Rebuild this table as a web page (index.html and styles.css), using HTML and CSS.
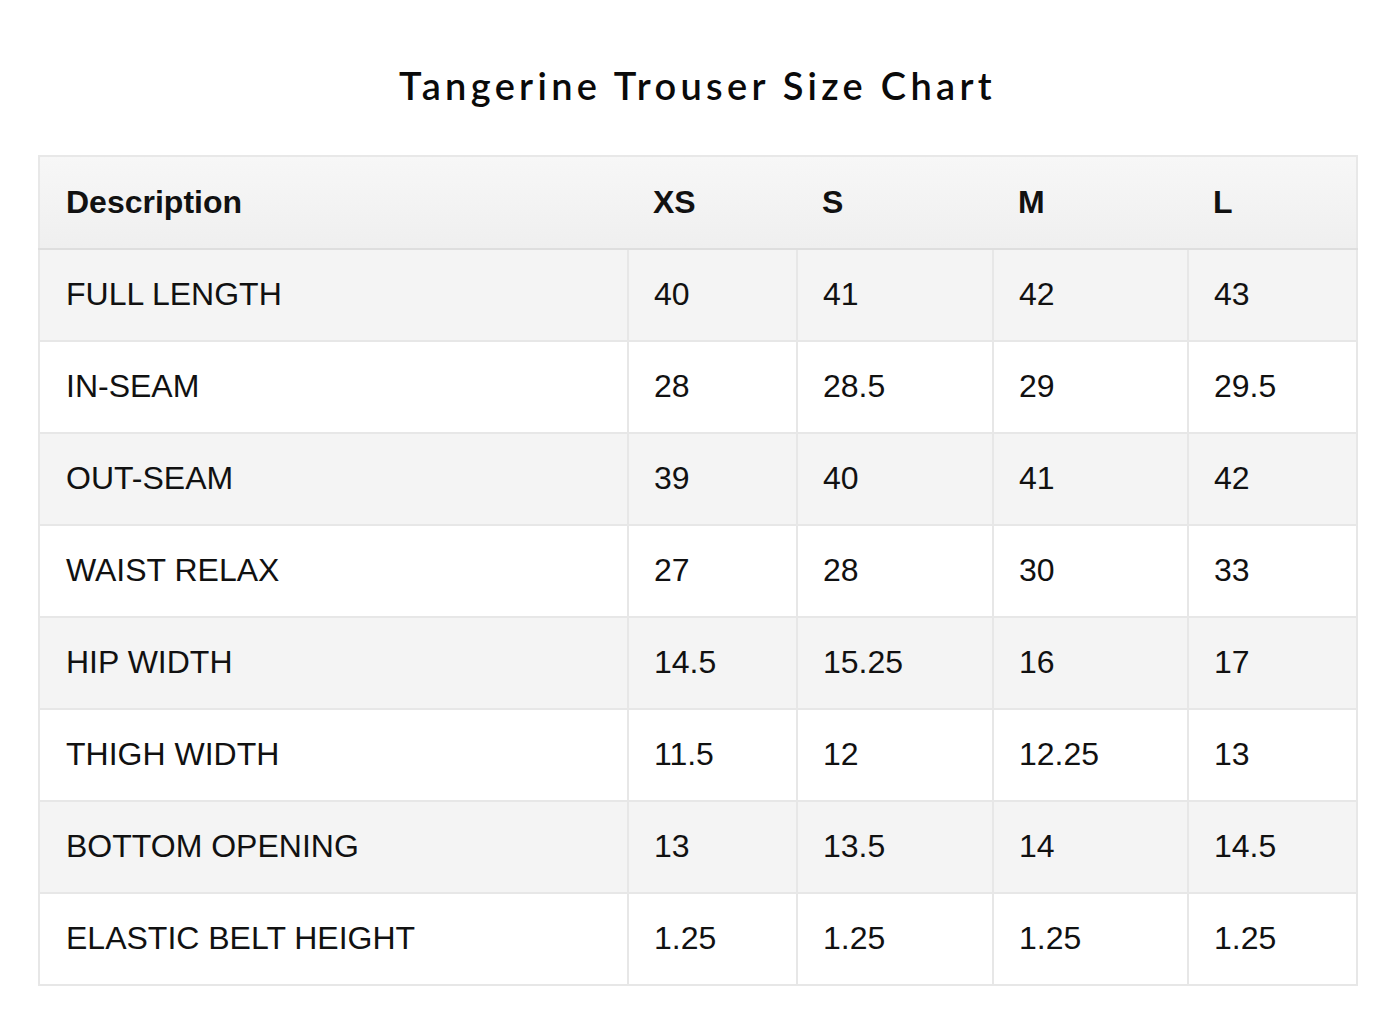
FILE: index.html
```html
<!DOCTYPE html>
<html>
<head>
<meta charset="utf-8">
<link rel="stylesheet" href="styles.css">
</head>
<body>
<div class="page">
  <h1 class="title">Tangerine Trouser Size Chart</h1>
  <table class="chart">
    <colgroup>
      <col class="c-desc">
      <col class="c-xs">
      <col class="c-s">
      <col class="c-m">
      <col class="c-l">
    </colgroup>
    <thead>
      <tr><th>Description</th><th>XS</th><th>S</th><th>M</th><th>L</th></tr>
    </thead>
    <tbody>
      <tr><td>FULL LENGTH</td><td>40</td><td>41</td><td>42</td><td>43</td></tr>
      <tr><td>IN-SEAM</td><td>28</td><td>28.5</td><td>29</td><td>29.5</td></tr>
      <tr><td>OUT-SEAM</td><td>39</td><td>40</td><td>41</td><td>42</td></tr>
      <tr><td>WAIST RELAX</td><td>27</td><td>28</td><td>30</td><td>33</td></tr>
      <tr><td>HIP WIDTH</td><td>14.5</td><td>15.25</td><td>16</td><td>17</td></tr>
      <tr><td>THIGH WIDTH</td><td>11.5</td><td>12</td><td>12.25</td><td>13</td></tr>
      <tr><td>BOTTOM OPENING</td><td>13</td><td>13.5</td><td>14</td><td>14.5</td></tr>
      <tr><td>ELASTIC BELT HEIGHT</td><td>1.25</td><td>1.25</td><td>1.25</td><td>1.25</td></tr>
    </tbody>
  </table>
</div>
</body>
</html>
```

FILE: styles.css
```css
html, body {
  margin: 0;
  padding: 0;
  background: #ffffff;
}
.page {
  padding: 60px 40px 0 38px;
}
.title {
  margin: 0 0 45px;
  height: 50px;
  line-height: 50px;
  text-align: center;
  font-family: "Lato", "Liberation Sans", sans-serif;
  font-weight: 600;
  font-size: 38px;
  letter-spacing: 4.3px;
  color: #0a0a0a;
}
.chart {
  width: 1318px;
  table-layout: fixed;
  border-collapse: collapse;
  font-family: "Liberation Sans", Arial, sans-serif;
  font-size: 32px;
  color: #111;
}
.c-desc { width: 589px; }
.c-xs { width: 169px; }
.c-s { width: 196px; }
.c-m { width: 195px; }
.c-l { width: 169px; }
.chart th {
  height: 91px;
  padding: 0 0 0 25px;
  text-align: left;
  font-weight: 700;
  background: linear-gradient(#f7f7f7, #efefef);
  border-top: 2px solid #e8e8e8;
  border-bottom: 2px solid #dedede;
}
.chart th:first-child {
  padding-left: 26px;
  border-left: 2px solid #e8e8e8;
}
.chart th:last-child {
  border-right: 2px solid #e8e8e8;
}
.chart td {
  height: 88px;
  padding: 0 0 2px 25px;
  text-align: left;
  border: 2px solid #e7e7e7;
}
.chart td:first-child {
  padding-left: 26px;
}
.chart tbody tr:nth-child(odd) td {
  background: #f4f4f4;
}
.chart tbody tr:nth-child(even) td {
  background: #ffffff;
}
```
